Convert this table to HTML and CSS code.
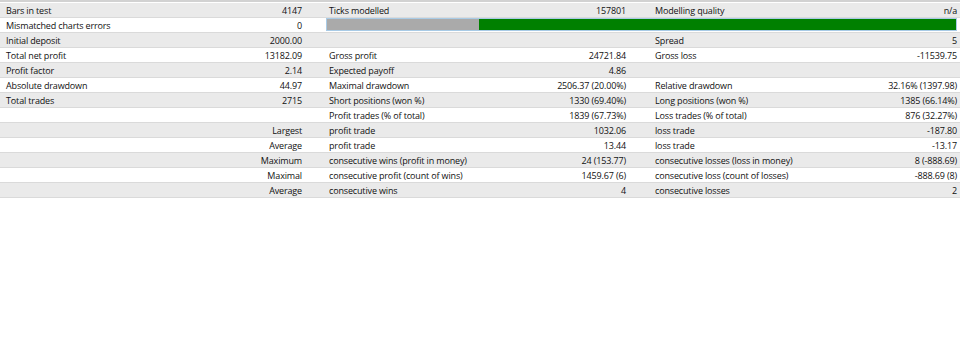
FILE: index.html
```html
<!DOCTYPE html>
<html>
<head>
<meta charset="utf-8">
<link rel="stylesheet" href="styles.css">
</head>
<body>
<div class="report">
  <div class="row odd"><div class="lbl l1">Bars in test</div><div class="val v1">4147</div><div class="lbl l2">Ticks modelled</div><div class="val v2">157801</div><div class="lbl l3">Modelling quality</div><div class="val v3">n/a</div></div>
  <div class="row"><div class="lbl l1">Mismatched charts errors</div><div class="val v1">0</div><div class="bar"><div class="bar-gray" style="width:24.1%"></div><div class="bar-green"></div></div></div>
  <div class="row odd"><div class="lbl l1">Initial deposit</div><div class="val v1">2000.00</div><div class="lbl l2"></div><div class="val v2"></div><div class="lbl l3">Spread</div><div class="val v3">5</div></div>
  <div class="row"><div class="lbl l1">Total net profit</div><div class="val v1">13182.09</div><div class="lbl l2">Gross profit</div><div class="val v2">24721.84</div><div class="lbl l3">Gross loss</div><div class="val v3">-11539.75</div></div>
  <div class="row odd"><div class="lbl l1">Profit factor</div><div class="val v1">2.14</div><div class="lbl l2">Expected payoff</div><div class="val v2">4.86</div><div class="lbl l3"></div><div class="val v3"></div></div>
  <div class="row"><div class="lbl l1">Absolute drawdown</div><div class="val v1">44.97</div><div class="lbl l2">Maximal drawdown</div><div class="val v2">2506.37 (20.00%)</div><div class="lbl l3">Relative drawdown</div><div class="val v3">32.16% (1397.98)</div></div>
  <div class="row odd"><div class="lbl l1">Total trades</div><div class="val v1">2715</div><div class="lbl l2">Short positions (won %)</div><div class="val v2">1330 (69.40%)</div><div class="lbl l3">Long positions (won %)</div><div class="val v3">1385 (66.14%)</div></div>
  <div class="row"><div class="lbl l1"></div><div class="val v1"></div><div class="lbl l2">Profit trades (% of total)</div><div class="val v2">1839 (67.73%)</div><div class="lbl l3">Loss trades (% of total)</div><div class="val v3">876 (32.27%)</div></div>
  <div class="row odd"><div class="lbl l1"></div><div class="val v1">Largest</div><div class="lbl l2">profit trade</div><div class="val v2">1032.06</div><div class="lbl l3">loss trade</div><div class="val v3">-187.80</div></div>
  <div class="row"><div class="lbl l1"></div><div class="val v1">Average</div><div class="lbl l2">profit trade</div><div class="val v2">13.44</div><div class="lbl l3">loss trade</div><div class="val v3">-13.17</div></div>
  <div class="row odd"><div class="lbl l1"></div><div class="val v1">Maximum</div><div class="lbl l2">consecutive wins (profit in money)</div><div class="val v2">24 (153.77)</div><div class="lbl l3">consecutive losses (loss in money)</div><div class="val v3">8 (-888.69)</div></div>
  <div class="row"><div class="lbl l1"></div><div class="val v1">Maximal</div><div class="lbl l2">consecutive profit (count of wins)</div><div class="val v2">1459.67 (6)</div><div class="lbl l3">consecutive loss (count of losses)</div><div class="val v3">-888.69 (8)</div></div>
  <div class="row odd"><div class="lbl l1"></div><div class="val v1">Average</div><div class="lbl l2">consecutive wins</div><div class="val v2">4</div><div class="lbl l3">consecutive losses</div><div class="val v3">2</div></div>
</div>
</body>
</html>
```
FILE: styles.css
```css
html, body {
  margin: 0;
  padding: 0;
  background: #ffffff;
}
body {
  width: 960px;
  height: 340px;
  overflow: hidden;
  font-family: "Open Sans", "Noto Sans", sans-serif;
  font-size: 9px;
  letter-spacing: -0.15px;
  color: #111111;
}
.report {
  border-top: 2px solid #d2d2d2;
  padding-top: 1px;
}
.row {
  display: grid;
  grid-template-columns: 160px 146px 170px 154px 170px 160px;
  height: 15px;
  box-sizing: border-box;
  border-bottom: 1px solid #dadada;
  background: #ffffff;
}
.row.odd {
  background: #eaeaea;
}
.lbl, .val {
  padding-top: 1px;
  line-height: 14px;
  white-space: nowrap;
  overflow: hidden;
}
.val {
  text-align: right;
}
.l1 { padding-left: 6px; }
.v1 { padding-right: 4px; }
.l2 { padding-left: 23px; }
.v2 { padding-right: 4px; }
.l3 { padding-left: 25px; }
.v3 { padding-right: 3px; }
.bar {
  grid-column: 3 / 7;
  margin: 0 3px 1px 20px;
  display: flex;
  border: 1px solid #a9cbe6;
}
.bar-gray {
  background: #aaaaaa;
}
.bar-green {
  flex: 1;
  background: #008000;
}
```
